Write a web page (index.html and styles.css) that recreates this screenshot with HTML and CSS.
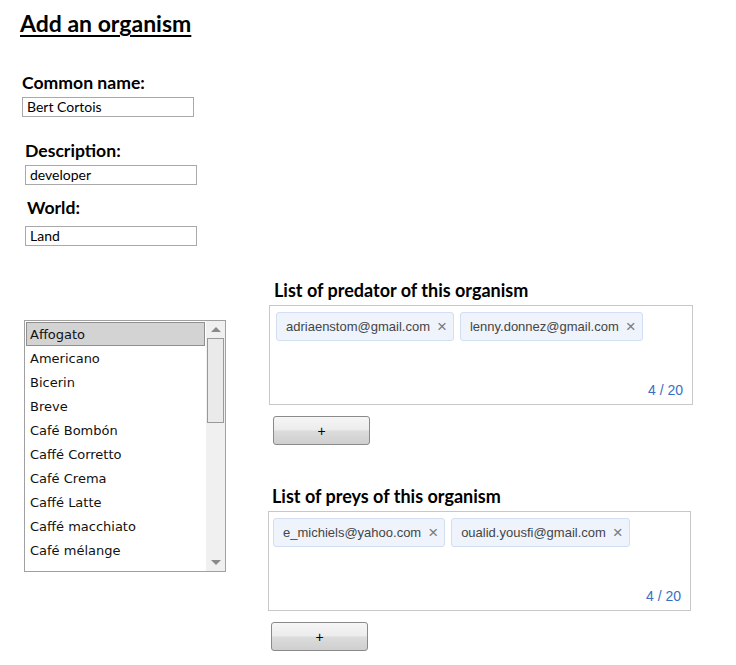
FILE: index.html
```html
<!DOCTYPE html>
<html>
<head>
<meta charset="utf-8">
<link rel="stylesheet" href="styles.css">
</head>
<body>
<div class="page">
  <h1 class="title">Add an organism</h1>

  <div class="field f1">
    <div class="label">Common name:</div>
    <div class="input">Bert Cortois</div>
  </div>
  <div class="field f2">
    <div class="label">Description:</div>
    <div class="input">developer</div>
  </div>
  <div class="field f3">
    <div class="label l3">World:</div>
    <div class="input">Land</div>
  </div>

  <div class="lower">
    <div class="listbox">
      <div class="items">
        <div class="item selected">Affogato</div>
        <div class="item">Americano</div>
        <div class="item">Bicerin</div>
        <div class="item">Breve</div>
        <div class="item">Café Bombón</div>
        <div class="item">Caffé Corretto</div>
        <div class="item">Café Crema</div>
        <div class="item">Caffé Latte</div>
        <div class="item">Caffé macchiato</div>
        <div class="item">Café mélange</div>
      </div>
      <div class="scrollbar">
        <div class="arrow up"></div>
        <div class="thumb"></div>
        <div class="track"></div>
        <div class="arrow down"></div>
      </div>
    </div>

    <div class="right">
      <div class="section s1">
        <div class="label sec-label">List of predator of this organism</div>
        <div class="tagbox">
          <div class="chips">
            <span class="chip">adriaenstom@gmail.com<span class="x">×</span></span>
            <span class="chip">lenny.donnez@gmail.com<span class="x">×</span></span>
          </div>
          <div class="counter">4 / 20</div>
        </div>
        <button class="add">+</button>
      </div>

      <div class="section s2">
        <div class="label sec-label">List of preys of this organism</div>
        <div class="tagbox">
          <div class="chips">
            <span class="chip">e_michiels@yahoo.com<span class="x">×</span></span>
            <span class="chip">oualid.yousfi@gmail.com<span class="x">×</span></span>
          </div>
          <div class="counter">4 / 20</div>
        </div>
        <button class="add">+</button>
      </div>
    </div>
  </div>
</div>
</body>
</html>
```

FILE: styles.css
```css
html, body {
  margin: 0;
  padding: 0;
  background: #ffffff;
}

.page {
  padding: 10px 0 0 20px;
  font-family: "Lato", "Open Sans", sans-serif;
  color: #000;
}

.title {
  margin: 0;
  font-size: 23px;
  line-height: 26px;
  font-weight: 700;
  text-decoration: underline;
  text-underline-offset: 3px;
  text-decoration-thickness: 2px;
}

.label {
  font-size: 18px;
  line-height: 20px;
  font-weight: 700;
}

.field {
  display: flex;
  flex-direction: column;
  align-items: flex-start;
}

.field .label {
  font-size: 17.6px;
  margin-bottom: 4px;
}

.f1 { margin: 37px 0 0 2px; }
.f2 { margin: 24px 0 0 5px; }
.f3 { margin: 13px 0 0 5px; }
.f3 .l3 { margin-left: 2px; margin-bottom: 8px; }

.input {
  box-sizing: border-box;
  width: 172px;
  height: 20px;
  border: 1px solid #a9a9a9;
  padding: 0 4px;
  font-size: 14px;
  line-height: 18px;
  color: #000;
  font-weight: 400;
}

.lower {
  display: flex;
  align-items: flex-start;
  margin-top: 34px;
}

.listbox {
  margin: 40px 0 0 4px;
  box-sizing: border-box;
  width: 202px;
  height: 252px;
  border: 1px solid #a0a0a0;
  display: flex;
  font-family: "DejaVu Sans", Verdana, sans-serif;
  font-size: 13px;
  color: #111;
}

.items {
  flex: 1;
  padding: 1px 1px 0 1px;
  overflow: hidden;
}

.item {
  height: 24px;
  line-height: 26px;
  padding-left: 4px;
  box-sizing: border-box;
  white-space: nowrap;
}

.item.selected {
  background: #d3d3d3;
  border: 1px solid #8f8f8f;
  line-height: 24px;
  padding-left: 3px;
}

.scrollbar {
  width: 19px;
  background: #f0f0f0;
  display: flex;
  flex-direction: column;
  align-items: center;
}

.arrow {
  width: 0;
  height: 0;
  border-left: 5px solid transparent;
  border-right: 5px solid transparent;
}

.arrow.up {
  border-bottom: 5px solid #8a8a8a;
  margin: 6px 0 6px;
}

.arrow.down {
  border-top: 5px solid #8a8a8a;
  margin: 6px 0 6px;
}

.thumb {
  box-sizing: border-box;
  width: 17px;
  height: 85px;
  border: 1px solid #999;
  background: #eaeaea;
}

.track {
  flex: 1;
}

.right {
  margin-left: 43px;
  display: flex;
  flex-direction: column;
}

.sec-label {
  margin-left: 5px;
}

.tagbox {
  box-sizing: border-box;
  width: 424px;
  height: 100px;
  margin-top: 5px;
  border: 1px solid #c8c8c8;
  padding: 6px 9px 6px 6px;
  display: flex;
  flex-direction: column;
  font-family: "Liberation Sans", Arial, sans-serif;
}

.chips {
  display: flex;
  gap: 6px;
}

.chip {
  box-sizing: border-box;
  height: 29px;
  display: inline-flex;
  align-items: center;
  padding: 0 6px 0 9px;
  background: #eef3fc;
  border: 1px solid #d2def2;
  border-radius: 3px;
  font-size: 13px;
  color: #454545;
}

.chip .x {
  margin-left: 7px;
  color: #7a7a7a;
  font-size: 17px;
  line-height: 1;
}

.counter {
  margin-top: auto;
  align-self: flex-end;
  font-size: 14px;
  line-height: 16px;
  color: #3a6ec2;
}

.add {
  box-sizing: border-box;
  width: 97px;
  height: 29px;
  margin: 11px 0 0 4px;
  border: 1px solid #8a8a8a;
  border-radius: 3px;
  background: linear-gradient(to bottom, #f6f6f6 0%, #ececec 48%, #dcdcdc 52%, #cfcfcf 100%);
  font-family: "Liberation Sans", Arial, sans-serif;
  font-size: 14px;
  color: #000;
  padding: 0;
}

.s2 {
  margin-top: 41px;
  margin-left: -1px;
}

.s2 .sec-label { margin-left: 4px; }
.s2 .tagbox { width: 423px; padding-left: 4px; }
.s2 .add { margin-left: 3px; }
```
